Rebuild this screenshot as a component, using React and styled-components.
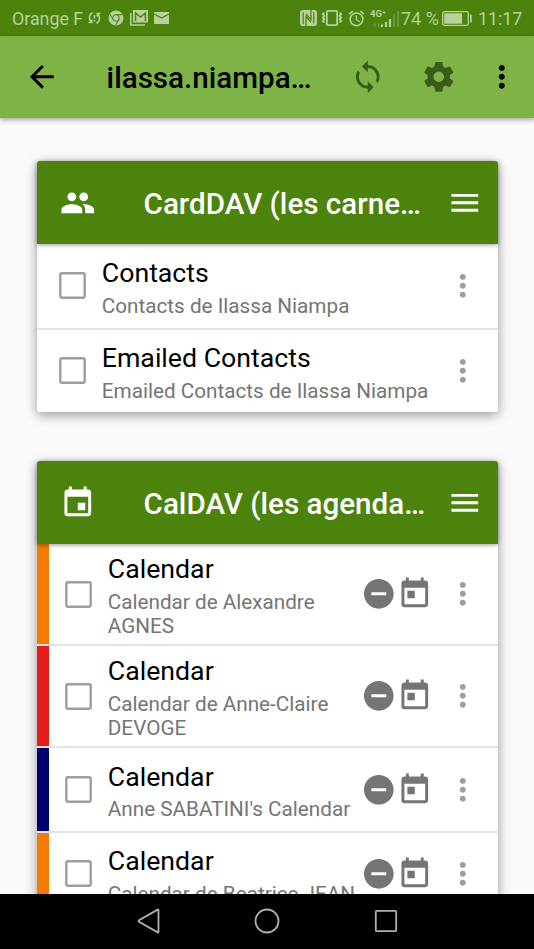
import React from "react";
import styled, { createGlobalStyle } from "styled-components";
import {
  MdArrowBack,
  MdSync,
  MdMoreVert,
  MdPeople,
  MdMenu,
  MdEvent,
  MdToday,
  MdRemoveCircle,
  MdAlarm,
} from "react-icons/md";

const ORANGE = "#f57c00";
const RED = "#e51c1c";
const NAVY = "#00006b";

const contacts = [
  { title: "Contacts", description: "Contacts de Ilassa Niampa" },
  { title: "Emailed Contacts", description: "Emailed Contacts de Ilassa Niampa" },
];

const calendars = [
  { title: "Calendar", description: "Calendar de Alexandre AGNES", color: ORANGE },
  { title: "Calendar", description: "Calendar de Anne-Claire DEVOGE", color: RED },
  { title: "Calendar", description: "Anne SABATINI's Calendar", color: NAVY },
  { title: "Calendar", description: "Calendar de Beatrice JEAN", color: ORANGE },
];

function StatusBar() {
  return (
    <Status>
      <Carrier>Orange F</Carrier>
      <Notifications>
        <svg width="13" height="14" viewBox="0 0 13 14" fill="none" stroke="currentColor" strokeWidth="1.5">
          <path d="M4.5 1.5C1 3.5.3 8 3.2 11.2M.6 11.6h3.2V8.6M8.5 12.5C12 10.5 12.7 6 9.8 2.8M12.4 2.4H9.2v3M6.5 4v3.8M6.5 9v1.5" />
        </svg>
        <svg width="16" height="16" viewBox="0 0 16 16">
          <circle cx="8" cy="8" r="7.5" fill="currentColor" />
          <g fill="none" stroke="#4b830d" strokeWidth="1">
            <circle cx="8" cy="8" r="3.3" />
            <path d="M8 4.700h6.700M5.100 9.600L1.800 4M10.900 9.600L7.600 15.300" />
          </g>
        </svg>
        <svg width="18" height="16" viewBox="0 0 18 16">
          <path d="M.8 3v12H15" fill="none" stroke="currentColor" strokeWidth="1.5" />
          <path d="M3 0h15v12.5H3z" fill="currentColor" />
          <path d="M5.6 11V3l4.900 4 4.900-4v8" fill="none" stroke="#4b830d" strokeWidth="1.5" />
        </svg>
        <svg width="15" height="12" viewBox="0 0 15 12">
          <path d="M0 0h15v12H0z" fill="currentColor" />
          <path d="M0 2l7.500 4L15 2" fill="none" stroke="#4b830d" strokeWidth="1.4" />
        </svg>
      </Notifications>
      <Indicators>
        <svg width="17" height="16" viewBox="0 0 17 16">
          <rect width="17" height="16" rx="3" fill="currentColor" />
          <path
            d="M3.200 14V2.600M13.800 2v11.400M6 16V6.500l5 5.500M11 0v9.500L6 4"
            fill="none"
            stroke="#4b830d"
            strokeWidth="1.2"
          />
        </svg>
        <svg width="22" height="16" viewBox="0 0 22 16" fill="none" stroke="currentColor" strokeWidth="1.8">
          <rect x="5.8" y=".9" width="10.4" height="14.2" rx="1" />
          <path d="M3.300 2.500L1.800 4.200l1.500 1.700-1.500 1.700 1.500 1.700-1.500 1.700 1.500 1.700M18.700 2.500l1.500 1.700-1.500 1.700 1.500 1.700-1.500 1.700 1.500 1.700-1.500 1.700" />
        </svg>
        <MdAlarm size={19} />
        <Signal width="30" height="20" viewBox="0 0 30 20">
          <text x="0" y="9">4G⁺</text>
          <path d="M12 19v-2.500M16 19v-5M20 19v-8" stroke="currentColor" strokeWidth="2.2" />
          <path d="M24 19V6M28 19V3" stroke="currentColor" strokeWidth="2" opacity=".3" />
          <path d="M5 19v-4M3.500 16.500L5 14.500M8.500 14.500V19l1.500-1.500" fill="none" stroke="currentColor" opacity=".4" />
        </Signal>
        <Percent>74 %</Percent>
        <svg width="30" height="15" viewBox="0 0 30 15">
          <rect x=".7" y=".7" width="25.6" height="13.6" rx="1.5" fill="none" stroke="currentColor" strokeWidth="1.3" />
          <path d="M2.200 2.300h17.800v10.400H2.200zM28 3.500h1.700v8H28z" fill="currentColor" />
        </svg>
        <Clock>11:17</Clock>
      </Indicators>
    </Status>
  );
}

function GearIcon() {
  return (
    <svg width="35.6" height="35.6" viewBox="0 0 24 24" fill="currentColor">
      <path d="M19.43 12.98c.04-.32.07-.64.07-.98s-.03-.66-.07-.98l2.11-1.65c.19-.15.24-.42.12-.64l-2-3.46c-.12-.22-.39-.3-.61-.22l-2.49 1c-.52-.4-1.08-.73-1.69-.98l-.38-2.65C14.46 2.18 14.25 2 14 2h-4c-.25 0-.46.18-.49.42l-.38 2.65c-.61.25-1.17.59-1.69.98l-2.49-1c-.23-.09-.49 0-.61.22l-2 3.46c-.13.22-.07.49.12.64l2.11 1.65c-.04.32-.07.65-.07.98s.03.66.07.98l-2.11 1.65c-.19.15-.24.42-.12.64l2 3.46c.12.22.39.3.61.22l2.49-1c.52.4 1.08.73 1.69.98l.38 2.65c.03.24.24.42.49.42h4c.25 0 .46-.18.49-.42l.38-2.65c.61-.25 1.17-.59 1.69-.98l2.49 1c.23.09.49 0 .61-.22l2-3.46c.12-.22.07-.49-.12-.64l-2.11-1.65zM12 15.5c-1.93 0-3.5-1.57-3.5-3.5s1.57-3.5 3.5-3.5 3.5 1.57 3.5 3.5-1.57 3.5-3.5 3.5z" />
    </svg>
  );
}

function Checkbox() {
  return (
    <CheckboxIcon width="27" height="27" viewBox="0 0 27 27">
      <rect x="1.3" y="1.3" width="24.4" height="24.4" rx="1.6" />
    </CheckboxIcon>
  );
}

/**
  * Card with a green toolbar and one row per collection.
  * Collections with a color are calendars and get the extra status icons.
  */
function CollectionCard({ icon, title, items }) {
  return (
    <Card>
      <CardHeader>
        {icon}
        <CardTitle>{title}</CardTitle>
        <MdMenu size={35.6} />
      </CardHeader>
      {items.map((item, i) => (
        <Row key={i}>
          {item.color && <ColorStrip color={item.color} />}
          <Checkbox />
          <RowText>
            <RowTitle>{item.title}</RowTitle>
            <RowDescription>{item.description}</RowDescription>
          </RowText>
          {item.color && (
            <RowIcons>
              <MdRemoveCircle size={35.6} />
              <MdToday size={35.6} />
            </RowIcons>
          )}
          <RowMenu size={35.6} />
        </Row>
      ))}
    </Card>
  );
}

function App() {
  return (
    <Screen>
      <GlobalStyle />
      <StatusBar />
      <AppBar>
        <MdArrowBack size={35.6} />
        <AppTitle>ilassa.niampa…</AppTitle>
        <Actions>
          <MdSync size={35.6} />
          <GearIcon />
        </Actions>
        <MdMoreVert size={35.6} />
      </AppBar>
      <Content>
        <CollectionCard icon={<MdPeople size={35.6} />} title="CardDAV (les carne…" items={contacts} />
        <CollectionCard icon={<MdEvent size={35.6} />} title="CalDAV (les agenda…" items={calendars} />
      </Content>
      <NavBar>
        <svg width="24" height="28" viewBox="0 0 24 28">
          <path d="M21.500 3v22q0 .8-.8.400L2 14.700q-.8-.7 0-1.400L20.700 2.600q.8-.4.800.4z" />
        </svg>
        <svg width="28" height="28" viewBox="0 0 28 28">
          <circle cx="14" cy="14" r="11.5" />
        </svg>
        <svg width="24" height="24" viewBox="0 0 24 24">
          <rect x="1.8" y="1.8" width="20.4" height="20.4" rx="1" />
        </svg>
      </NavBar>
    </Screen>
  );
}

export default App;

const GlobalStyle = createGlobalStyle`
  body {
    margin: 0;
    font-family: Roboto, "Liberation Sans", sans-serif;
  }

  svg {
    display: block;
    flex-shrink: 0;
  }
`;

const Screen = styled.div`
  width: 534px;
  height: 949px;
  display: flex;
  flex-direction: column;
  background: #fafafa;
  overflow: hidden;
`;

const Status = styled.div`
  height: 35.5px;
  box-sizing: border-box;
  flex-shrink: 0;
  display: flex;
  align-items: center;
  padding: 1px 12px 0;
  background: #4b830d;
  color: #b9d09e;
  font-size: 18px;
`;

const Carrier = styled.span`
  width: 76px;
  font-size: 17.8px;
  white-space: nowrap;
`;

const Notifications = styled.div`
  display: flex;
  align-items: center;
  gap: 6px;

  svg:nth-child(2) {
    margin-left: 1px;
  }
`;

const Indicators = styled.div`
  margin-left: auto;
  display: flex;
  align-items: center;
  gap: 4px;
`;

const Signal = styled.svg`
  margin-right: -3px;
  fill: currentColor;
  font-size: 9.5px;
  font-weight: 700;
`;

const Percent = styled.span`
  width: 37px;
  white-space: nowrap;
`;

const Clock = styled.span`
  margin-left: 2px;
  width: 44px;
  font-size: 17.8px;
  white-space: nowrap;
`;

const AppBar = styled.header`
  height: 82.5px;
  box-sizing: border-box;
  flex-shrink: 0;
  display: flex;
  align-items: center;
  padding: 0 14.5px 0 24px;
  background: #7eb345;
  color: #000;
  box-shadow: 0 2px 5px rgba(0, 0, 0, 0.35);
  z-index: 1;
`;

const AppTitle = styled.h1`
  margin: 2px 0 0 47px;
  flex: 1;
  font-size: 29.6px;
  font-weight: 500;
  white-space: nowrap;
`;

const Actions = styled.div`
  display: flex;
  gap: 35.6px;
  margin-right: 27px;
  color: #3b5a1c;
`;

const Content = styled.main`
  flex: 1;
  min-height: 0;
  overflow: hidden;
  display: flex;
  flex-direction: column;
  gap: 49px;
  padding: 43px 36.5px 0;
`;

const Card = styled.section`
  flex-shrink: 0;
  border-radius: 3px;
  background: #fff;
  box-shadow: 0 3px 12px rgba(0, 0, 0, 0.4);
`;

const CardHeader = styled.div`
  position: relative;
  height: 83px;
  box-sizing: border-box;
  display: flex;
  align-items: center;
  padding: 0 15px 0 23.5px;
  border-radius: 3px 3px 0 0;
  background: #4b830d;
  color: #fff;
  box-shadow: 0 1px 4px rgba(0, 0, 0, 0.4);
`;

const CardTitle = styled.h2`
  margin: 2px 0 0 48px;
  flex: 1;
  font-size: 29.6px;
  font-weight: 500;
  white-space: nowrap;
`;

const Row = styled.div`
  min-height: 84.5px;
  box-sizing: border-box;
  display: flex;
  align-items: center;
  padding-right: 16.5px;

  &:nth-child(2) {
    min-height: 83.5px;
  }

  & + & {
    border-top: 2px solid #e4e4e4;
  }
`;

const ColorStrip = styled.div`
  align-self: stretch;
  width: 12px;
  margin-right: -6px;
  background: ${(props) => props.color};
`;

const CheckboxIcon = styled.svg`
  margin-left: 22px;
  fill: none;
  stroke: #9e9e9e;
  stroke-width: 2.4px;
`;

const RowText = styled.div`
  flex: 1;
  min-width: 0;
  margin-left: 16.3px;
  padding: 10.3px 0 5.7px;
`;

const RowTitle = styled.div`
  font-size: 26.7px;
  line-height: 31.3px;
  color: #000;
`;

const RowDescription = styled.div`
  margin-top: 4px;
  font-size: 20.7px;
  line-height: 24.4px;
  color: #757575;
`;

const RowIcons = styled.div`
  display: flex;
  margin-right: 13px;
  color: #757575;
`;

const RowMenu = styled(MdMoreVert)`
  color: #9e9e9e;
`;

const NavBar = styled.nav`
  height: 55.5px;
  flex-shrink: 0;
  z-index: 1;
  display: flex;
  align-items: center;
  justify-content: center;
  gap: 92.5px;
  background: #000;

  svg {
    fill: none;
    stroke: #b0b0b0;
    stroke-width: 1.8px;
  }
`;
